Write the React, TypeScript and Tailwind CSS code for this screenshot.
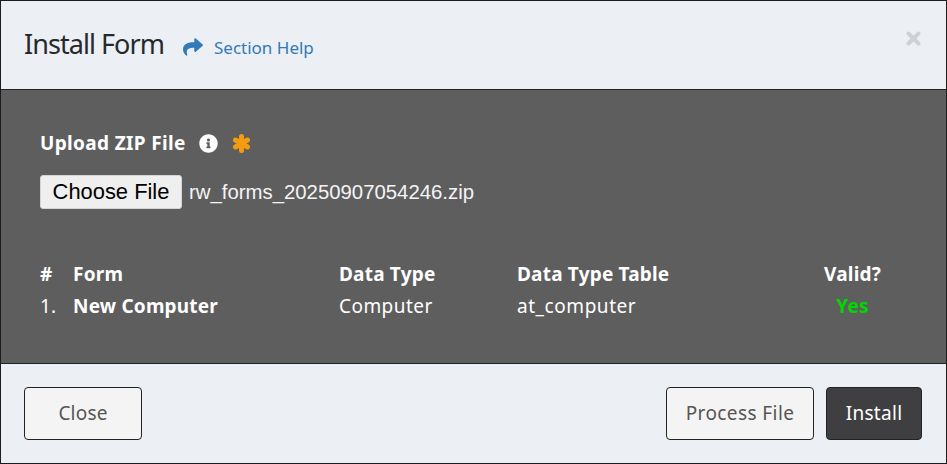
import { FaShare, FaInfoCircle } from "react-icons/fa";

export default function App() {
  return (
    <div className="h-[464px] w-[947px] overflow-hidden border border-[#1c1c1c] bg-[#eceff4] flex flex-col font-['Noto_Sans','Open_Sans',sans-serif] text-[19px]">
      <header className="h-[89px] shrink-0 flex items-start border-b border-[#222] pl-[23px] pr-[25px]">
        <h1 className="mt-[24px] text-[27px] leading-[38px] text-[#26292c] tracking-[-0.95px]">Install Form</h1>
        <a className="ml-[19px] mt-[33px] flex items-center text-[#337ab7] text-[17px] leading-[28px]">
          <FaShare className="w-[20px] h-[20px] mr-[11px] -mt-[3px]" />
          Section Help
        </a>
        <svg viewBox="0 0 15 15" className="ml-auto mt-[30px] w-[15px] h-[15px] text-[#cdd0d4]" stroke="currentColor" strokeWidth="4" strokeLinecap="round">
          <path d="M2.5 2.5 12.5 12.5M12.5 2.5 2.5 12.5" />
        </svg>
      </header>
      <main className="h-[273px] shrink-0 bg-[#5e5e5e] text-white px-[39px] pt-[39px]">
        <label className="flex items-center h-[28px] font-bold tracking-[0.35px]">
          Upload ZIP File
          <FaInfoCircle className="ml-[13px] w-[19px] h-[19px]" />
          <svg viewBox="0 0 19 19" className="ml-[14px] w-[19px] h-[19px] text-[#f39c12]" stroke="currentColor" strokeWidth="5" strokeLinecap="round">
            <path d="M9.5 2.5V16.5M3.5 6 15.5 13M15.5 6 3.5 13" />
          </svg>
        </label>
        <div className="mt-[18px] flex items-center h-[34px]">
          <button className="w-[142px] h-[34px] rounded-[3px] bg-[#efefef] border border-[#d4d4d4] text-black text-[21.9px] font-['Liberation_Sans',sans-serif]">Choose File</button>
          <span className="ml-[7px] text-[20.35px] font-['Liberation_Sans',sans-serif] text-[#f4f4f4]">rw_forms_20250907054246.zip</span>
        </div>
        <table className="mt-[49px] w-[842px] text-left table-fixed tracking-[0.2px]">
          <thead>
            <tr className="h-[32px]">
              <th className="w-[33px] font-bold">#</th>
              <th className="w-[266px] font-bold">Form</th>
              <th className="w-[178px] font-bold">Data Type</th>
              <th className="w-[306px] font-bold">Data Type Table</th>
              <th className="font-bold text-center">Valid?</th>
            </tr>
          </thead>
          <tbody>
            <tr className="h-[32px]">
              <td>1.</td>
              <td className="font-bold">New Computer</td>
              <td className="tracking-[0.45px]">Computer</td>
              <td className="tracking-[0.55px]">at_computer</td>
              <td className="font-bold text-center text-[#00d600]">Yes</td>
            </tr>
          </tbody>
        </table>
      </main>
      <footer className="flex-1 border-t border-[#222] flex items-start pt-[23px] pl-[23px] pr-[24px]">
        <button className="w-[118px] h-[53px] rounded-[4px] border border-[#222] bg-[#f4f4f4] text-[#555] tracking-[0.2px]">Close</button>
        <button className="ml-auto w-[148px] h-[53px] rounded-[4px] border border-[#222] bg-[#f4f4f4] text-[#555] tracking-[0.4px]">Process File</button>
        <button className="ml-[12px] w-[96px] h-[53px] rounded-[4px] border border-[#222] bg-[#3f3f41] text-white tracking-[0.3px]">Install</button>
      </footer>
    </div>
  );
}
